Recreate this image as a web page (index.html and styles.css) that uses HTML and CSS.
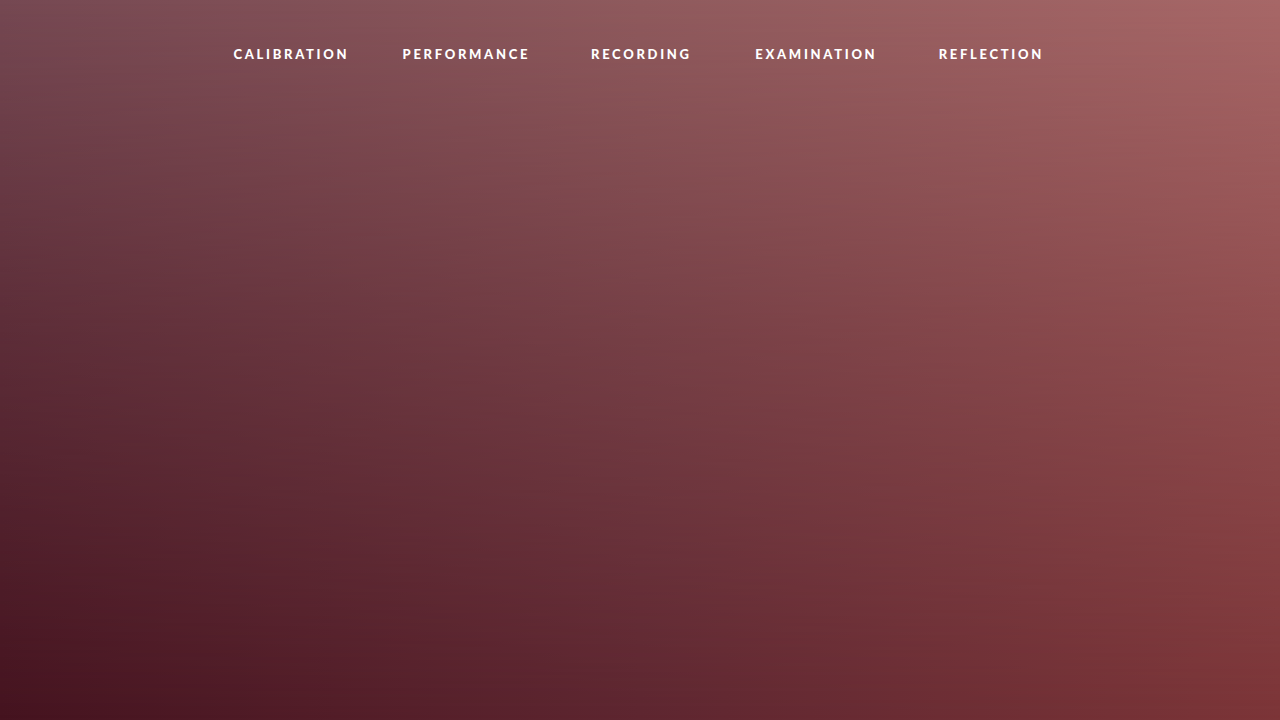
FILE: index.html
```html
<!DOCTYPE html>
<html lang="en">
<head>
<meta charset="utf-8">
<title>Navigation</title>
<link rel="stylesheet" href="styles.css">
</head>
<body>
<div class="page">
  <nav class="nav">
    <a class="nav-item" href="#">CALIBRATION</a>
    <a class="nav-item" href="#">PERFORMANCE</a>
    <a class="nav-item" href="#">RECORDING</a>
    <a class="nav-item" href="#">EXAMINATION</a>
    <a class="nav-item" href="#">REFLECTION</a>
  </nav>
</div>
</body>
</html>
```
FILE: styles.css
```css
html, body {
  margin: 0;
  padding: 0;
  height: 100%;
}
body {
  font-family: "Lato", "DejaVu Sans", sans-serif;
}
.page {
  position: relative;
  width: 100%;
  height: 720px;
  overflow: hidden;
  background: linear-gradient(to right, #45131f 0%, #5e2630 50%, #7c3538 100%);
}
.page::before {
  content: "";
  position: absolute;
  inset: 0;
  background: linear-gradient(to right, #754852 0%, #8f5a5d 50%, #a76767 100%);
  -webkit-mask-image: linear-gradient(to bottom, #000 0%, rgba(0,0,0,0.5) 45%, transparent 100%);
  mask-image: linear-gradient(to bottom, #000 0%, rgba(0,0,0,0.5) 45%, transparent 100%);
}
.nav {
  position: relative;
  display: grid;
  grid-template-columns: repeat(5, 175px);
  justify-content: center;
  padding-top: 46px;
}
.nav-item {
  text-align: center;
  color: #ffffff;
  text-decoration: none;
  font-size: 13px;
  font-weight: 900;
  letter-spacing: 2.7px;
  line-height: 17px;
  padding-left: 2.7px;
}
```
